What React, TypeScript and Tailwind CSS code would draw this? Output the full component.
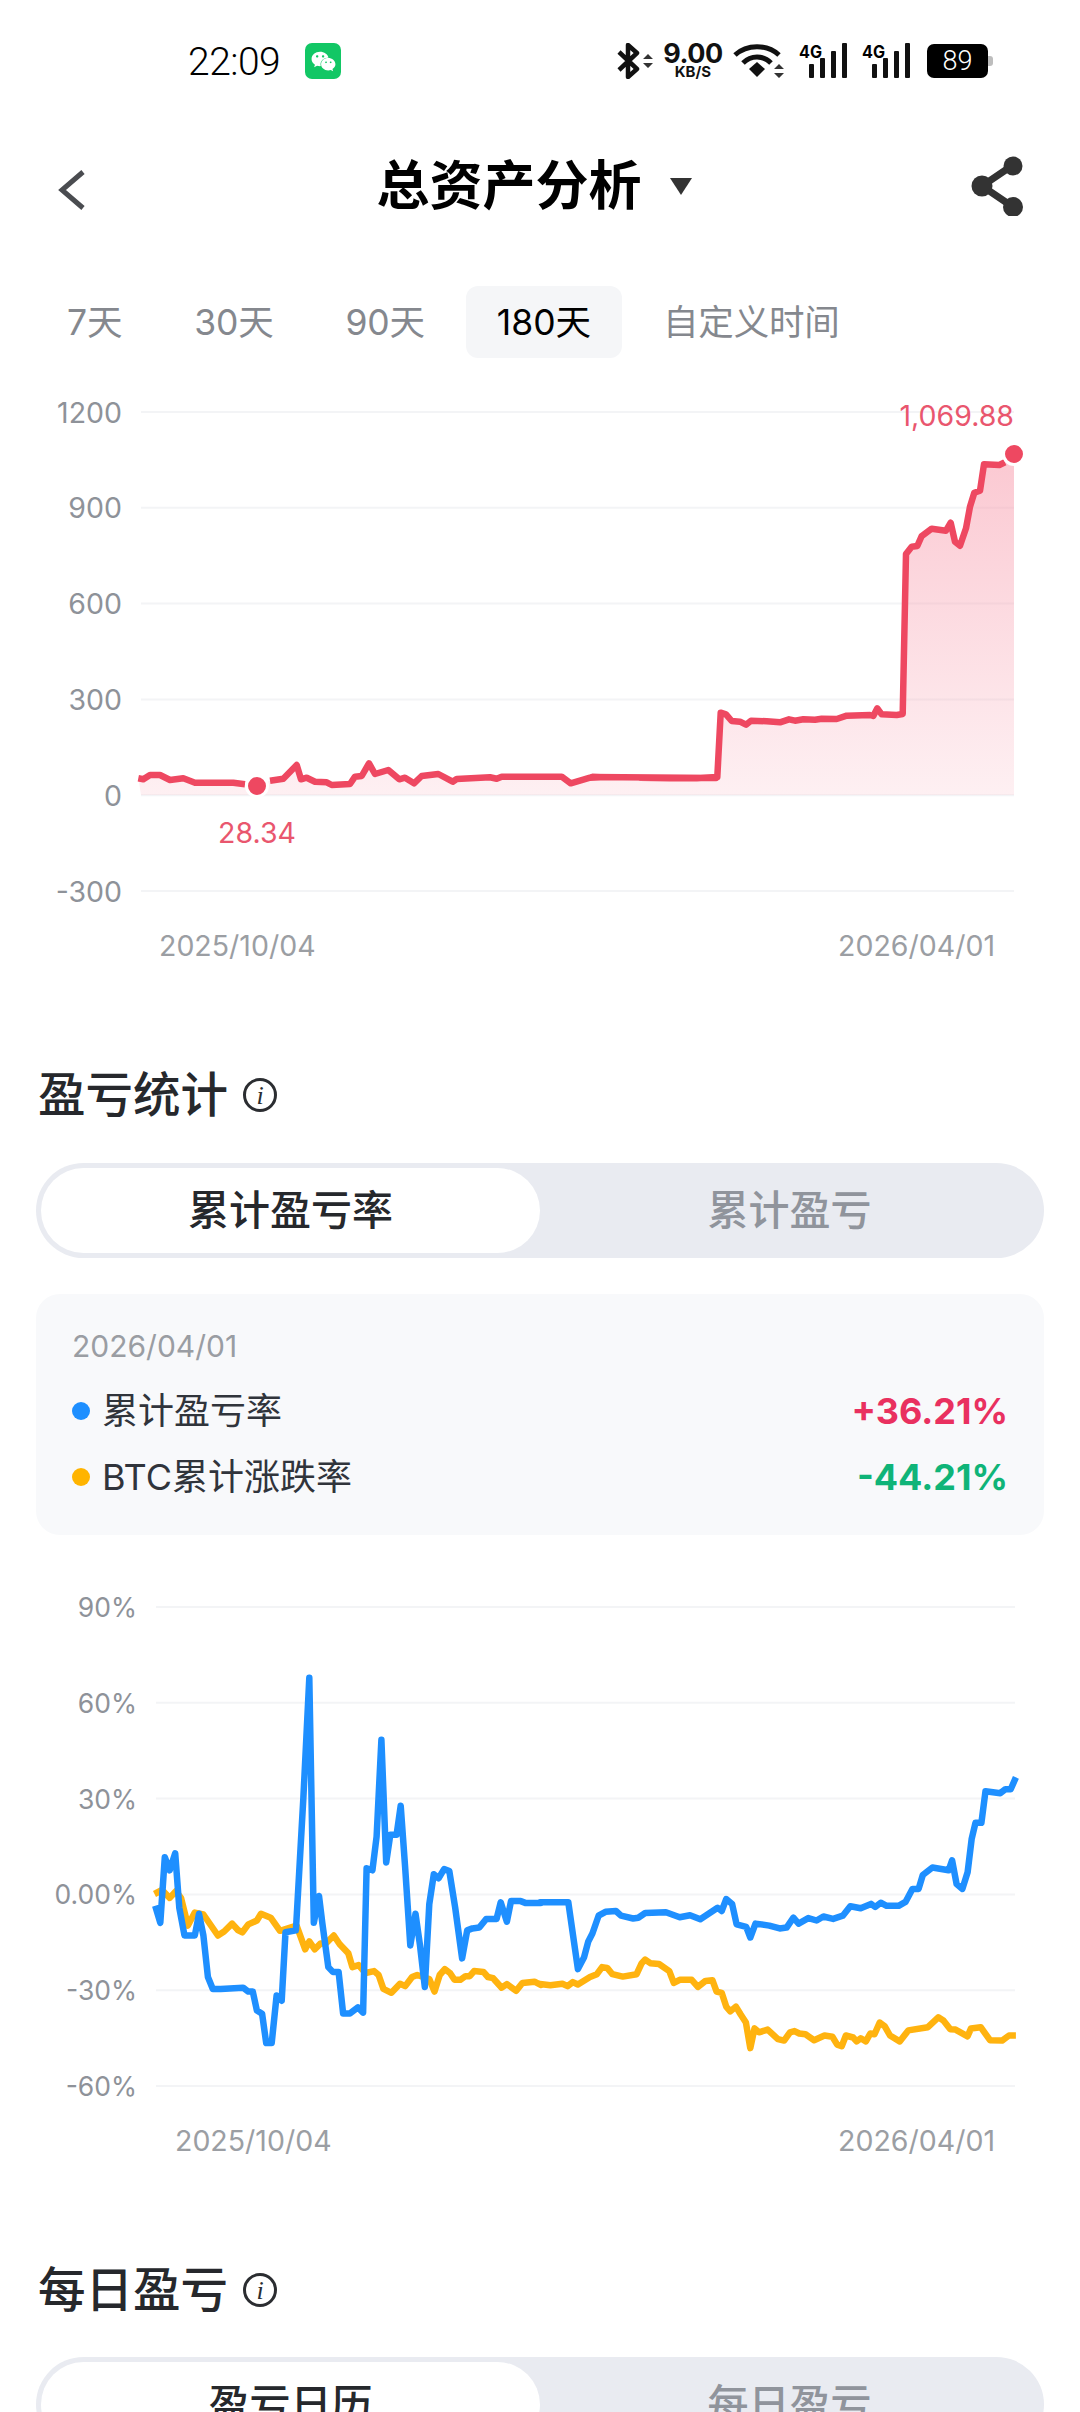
import React from "react";
import { FaWeixin } from "react-icons/fa";

// traced points, "x,y x,y ..." in crop coordinates, mapped to page coordinates by pts()
const pts = (raw: string, ox: number, oy: number, sx: number, sy: number) =>
  raw.trim().split(/\s+/).map((p) => {
    const [x, y] = p.split(",").map(Number);
    return `${(ox + x / sx).toFixed(1)},${(oy + y / sy).toFixed(1)}`;
  });

const assetLeft = pts("55,295 70,298 90,285 120,285 150,300 190,295 225,308 340,308 375,313", 120, 680, 3, 3);
const assetMid = pts("450,302 490,296 530,255 543,298 560,293 585,305 620,307 635,315 690,312 705,290 725,288 747,250 765,282 805,270 838,298 855,293 882,310 905,288 955,282 998,305 1010,297 1110,292 1130,296 1145,290 1325,290 1352,310 1410,293 1440,292", 120, 680, 3, 3);
const assetRight = pts("0,1133 90,1135 170,1135 232,1131 242,938 258,943 275,963 300,965 318,974 333,962 380,964 420,967 447,958 465,962 490,958 525,959 545,956 590,957 620,947 690,945 700,948 712,925 725,943 770,945 788,942 798,462 815,440 832,438 845,408 875,386 918,392 932,368 945,425 960,437 978,385 990,320 1003,278 1020,272 1032,193 1078,195 1095,187", 640, 400, 3, 3);

const blue = [
  ...pts("450,875 465,918 478,752 492,785 508,742 520,880 535,950 565,950 577,895 590,950 603,1055 617,1085 640,1085 705,1082 720,1092 733,1092 745,1140 760,1148 772,1222 788,1222 802,1102 817,1115 828,942 858,937 880,600 897,298 910,918 925,850 935,920 952,1030 965,1042 982,1042 995,1147 1015,1147 1038,1132 1053,1145 1063,780 1080,785 1092,700 1106,455 1120,765 1132,695 1150,695 1162,622 1175,780 1190,975 1205,895 1218,975 1232,1080 1245,870 1258,795 1272,805 1288,782 1303,787 1320,880 1340,1008 1355,937 1370,932 1390,930 1410,908 1440,908 1452,866 1470,915 1482,863 1510,863 1525,868 1568,868", 0, 1560, 2.9, 2.53),
  ...pts("0,866 82,866 110,1035 128,1005 140,965 152,945 170,900 190,890 220,888 235,900 270,907 285,905 305,893 365,891 405,904 435,899 465,909 515,880 527,888 540,858 557,870 570,922 598,928 610,955 625,920 665,925 695,932 715,930 735,905 750,920 778,906 802,912 822,902 850,908 878,900 900,876 930,881 960,870 972,878 988,867 1005,875 1040,875 1060,865 1080,832 1098,832 1110,797 1138,778 1185,785 1195,760 1208,820 1225,832 1240,790 1252,705 1263,665 1280,665 1292,585 1335,590 1350,580 1365,580 1380,550", 540, 1560, 2.9, 2.53),
];

const yellow = [
  ...pts("448,845 470,835 492,855 510,838 525,855 545,925 565,892 590,897 632,950 650,940 673,920 690,936 703,942 720,922 745,912 757,895 785,905 812,938 860,925 885,985 897,965 913,985 930,970 945,970 968,950 985,972 1010,995 1022,1030 1040,1025 1060,1045 1085,1040 1098,1050 1112,1085 1135,1095 1160,1072 1175,1078 1195,1055 1210,1050 1245,1060 1260,1092 1275,1050 1290,1035 1305,1045 1318,1062 1335,1062 1350,1053 1362,1053 1375,1040 1402,1042 1415,1055 1430,1058 1455,1082 1470,1073 1497,1090 1515,1070 1550,1067 1568,1075", 0, 1560, 2.9, 2.53),
  ...pts("0,1073 30,1076 65,1072 80,1078 95,1068 110,1074 145,1055 165,1048 180,1030 195,1032 210,1048 240,1054 280,1048 295,1020 305,1011 320,1020 345,1022 375,1040 388,1070 405,1062 440,1062 458,1080 480,1065 500,1063 512,1092 527,1095 540,1130 552,1142 568,1130 582,1150 597,1170 610,1235 622,1185 635,1195 660,1188 690,1212 708,1216 725,1195 738,1192 752,1198 770,1200 795,1215 825,1203 848,1206 862,1226 875,1230 887,1203 908,1208 918,1218 930,1210 945,1218 958,1198 970,1200 985,1170 1000,1180 1015,1203 1043,1218 1068,1190 1125,1182 1155,1157 1170,1165 1190,1187 1205,1188 1240,1205 1250,1185 1278,1182 1305,1215 1340,1216 1360,1203 1380,1203", 540, 1560, 2.9, 2.53),
];

const assetLine = [...assetLeft, "257,786", ...assetMid, "592,777", "716,778", ...assetRight];

function Bars({ x }: { x: number }) {
  return (
    <svg width="48" height="36" viewBox="0 0 48 36" className="block">
      <text x="0" y="14.5" className="fill-black text-[17px] font-bold" textLength="23" lengthAdjust="spacingAndGlyphs">4G</text>
      <rect x={x} y="21" width="5" height="14" rx="1" fill="#111" />
      <rect x={x + 11} y="15" width="5" height="20" rx="1" fill="#111" />
      <rect x={x + 22} y="8" width="5" height="27" rx="1" fill="#111" />
      <rect x={x + 33} y="0" width="5" height="35" rx="1" fill="#111" />
    </svg>
  );
}

function StatusBar() {
  return (
    <div className="flex h-[122px] shrink-0 items-center pl-[188px] text-black">
      <span className="w-[117px] pt-[2px] text-[39px] leading-none font-light tracking-[-0.5px] font-['Roboto',sans-serif]">22:09</span>
      <div className="flex h-[36px] w-[36px] items-center justify-center rounded-[7px] bg-[#12C765]">
        <FaWeixin className="text-[25px] text-white" />
      </div>
      <div className="ml-[276px] flex items-center">
        <svg width="36" height="36" viewBox="0 0 36 36" className="block">
          <path d="M2 9 L20 26 L11 34 L11 2 L20 10 L2 27" fill="none" stroke="#111" strokeWidth="4.5" strokeLinejoin="round" />
          <path d="M26 16 L31 11 L36 16 Z M26 20 L31 25 L36 20 Z" fill="#333" />
        </svg>
        <div className="ml-[10px] flex w-[60px] flex-col items-center font-['Inter',sans-serif] text-[#111]">
          <span className="h-[22px] text-[27px] leading-[22px] font-bold tracking-[-0.5px]">9.00</span>
          <span className="h-[14px] text-[15px] leading-[14px] font-bold">KB/S</span>
        </div>
        <svg width="52" height="38" viewBox="0 0 52 38" className="ml-[10px] block">
          <path d="M2 13 C14 2 34 2 46 13" fill="none" stroke="#111" strokeWidth="5" />
          <path d="M10 21 C18 13 30 13 38 21" fill="none" stroke="#111" strokeWidth="5" />
          <path d="M16 27 L24 20 L32 27 L24 35 Z" fill="#111" />
          <path d="M41 27 L46 22 L51 27 Z M41 31 L46 36 L51 31 Z" fill="#333" />
        </svg>
        <div className="ml-[14px]">
          <Bars x={10} />
        </div>
        <div className="ml-[15px]">
          <Bars x={10} />
        </div>
        <div className="ml-[17px] flex items-center">
          <div className="flex h-[34px] w-[61px] items-center justify-center rounded-[7px] bg-black text-[27px] leading-none font-light text-white font-['Roboto',sans-serif]">89</div>
          <div className="h-[10px] w-[5px] rounded-r-[3px] bg-[#bdbdbd]" />
        </div>
      </div>
    </div>
  );
}

function Header() {
  return (
    <div className="relative flex h-[128px] shrink-0 items-center justify-between pl-[58px] pr-[56px]">
      <svg width="28" height="40" viewBox="0 0 28 40" className="mt-[7px] block">
        <polyline points="25,2 4,20 25,38" fill="none" stroke="#4a4c50" strokeWidth="5" />
      </svg>
      <div className="ml-[14px] flex items-center">
        <span className="text-[53px] leading-none font-bold text-black">总资产分析</span>
        <svg width="22" height="17" viewBox="0 0 22 17" className="ml-[28px] block">
          <path d="M0 0 H22 L11 17 Z" fill="#333" />
        </svg>
      </div>
      <svg width="56" height="60" viewBox="0 0 56 60" className="block">
        <path d="M45 9 L14 30 L45 51" fill="none" stroke="#333" strokeWidth="7" />
        <circle cx="45" cy="10" r="9.5" fill="#333" />
        <circle cx="14" cy="30" r="10.5" fill="#333" />
        <circle cx="45" cy="51" r="10" fill="#333" />
      </svg>
    </div>
  );
}

const ranges = ["7天", "30天", "90天", "180天", "自定义时间"];

function RangeTabs() {
  return (
    <div className="mt-[36px] flex h-[72px] shrink-0 gap-[10px] pl-[36px]">
      {ranges.map((r) => (
        <div
          key={r}
          className={
            r === "180天"
              ? "flex items-center rounded-[12px] bg-[#F5F6F8] px-[31px] pt-[2px] text-[35.5px] leading-none text-black"
              : "flex items-center px-[31px] pt-[2px] text-[35.5px] leading-none tracking-[-0.2px] text-[#85888e]"
          }
        >
          {r}
        </div>
      ))}
    </div>
  );
}

const axisText = "fill-[#8e9299] text-[28.5px]";
const rateAxisText = "fill-[#8e9299] text-[26.5px]";
const dateText = "fill-[#9b9ea3] text-[28.5px]";

function AssetChart() {
  const labels = ["1200", "900", "600", "300", "0", "-300"];
  const linePath = assetLine.join(" ");
  return (
    <svg width="1080" height="595" viewBox="0 390 1080 595" className="mt-[32px] block shrink-0">
      <defs>
        <linearGradient id="assetFill" gradientUnits="userSpaceOnUse" x1="0" y1="450" x2="0" y2="795">
          <stop offset="0" stopColor="#F8A0B0" stopOpacity="0.58" />
          <stop offset="1" stopColor="#F8A0B0" stopOpacity="0.16" />
        </linearGradient>
      </defs>
      {labels.map((l, i) => {
        const y = 412 + i * 95.8;
        return (
          <g key={l}>
            <line x1="141" x2="1014" y1={y} y2={y} stroke="#F3F4F6" strokeWidth="2" />
            <text x="122" y={y} textAnchor="end" dominantBaseline="central" className={axisText}>{l}</text>
          </g>
        );
      })}
      <polygon points={`141,795 ${linePath} 1014,454 1014,795`} fill="url(#assetFill)" />
      <polyline points={assetLine.slice(0, 9).join(" ")} fill="none" stroke="#EE4861" strokeWidth="6.5" strokeLinejoin="round" />
      <polyline points={assetLine.slice(10).join(" ")} fill="none" stroke="#EE4861" strokeWidth="6.5" strokeLinejoin="round" />
      <circle cx="257" cy="786" r="10.5" fill="#EE4861" stroke="#fff" strokeWidth="3" />
      <circle cx="1014" cy="454" r="10.5" fill="#EE4861" stroke="#fff" strokeWidth="3" />
      <text x="1014" y="415" textAnchor="end" dominantBaseline="central" className="fill-[#E9566E] text-[28.5px]">1,069.88</text>
      <text x="257" y="832" textAnchor="middle" dominantBaseline="central" className="fill-[#E9566E] text-[28.5px]">28.34</text>
      <text x="159" y="945" dominantBaseline="central" className={dateText}>2025/10/04</text>
      <text x="995" y="945" textAnchor="end" dominantBaseline="central" className={dateText}>2026/04/01</text>
    </svg>
  );
}

function RateChart() {
  const labels = ["90%", "60%", "30%", "0.00%", "-30%", "-60%"];
  return (
    <svg width="1080" height="590" viewBox="0 1580 1080 590" className="mt-[45px] block shrink-0">
      {labels.map((l, i) => {
        const y = 1607 + i * 95.8;
        return (
          <g key={l}>
            <line x1="156" x2="1015" y1={y} y2={y} stroke="#F3F4F6" strokeWidth="2" />
            <text x="137" y={y} textAnchor="end" dominantBaseline="central" className={rateAxisText}>{l}</text>
          </g>
        );
      })}
      <polyline points={yellow.join(" ")} fill="none" stroke="#FFB30F" strokeWidth="6.5" strokeLinejoin="round" />
      <polyline points={blue.join(" ")} fill="none" stroke="#1E8FFF" strokeWidth="6.5" strokeLinejoin="round" />
      <text x="175" y="2140" dominantBaseline="central" className={dateText}>2025/10/04</text>
      <text x="995" y="2140" textAnchor="end" dominantBaseline="central" className={dateText}>2026/04/01</text>
    </svg>
  );
}

function SectionTitle({ text }: { text: string }) {
  return (
    <div className="flex h-[60px] items-center pl-[38px]">
      <span className="text-[47.5px] leading-none font-medium text-[#26282c]">{text}</span>
      <svg width="36" height="36" viewBox="0 0 36 36" className="ml-[14px] block">
        <circle cx="18" cy="18" r="15.5" fill="none" stroke="#2b2d31" strokeWidth="3" />
        <text x="18" y="27" textAnchor="middle" className="fill-[#2b2d31] text-[26px] italic font-['Liberation_Serif',serif]">i</text>
      </svg>
    </div>
  );
}

function Segment({ left, right }: { left: string; right: string }) {
  return (
    <div className="mx-[36px] flex h-[95px] rounded-full bg-[#E9EBF1] p-[5px]">
      <div className="flex w-[499px] items-center justify-center rounded-full bg-white text-[41px] leading-none font-medium text-[#26282c]">{left}</div>
      <div className="flex flex-1 items-center justify-center text-[41px] leading-none font-medium text-[#90949c]">{right}</div>
    </div>
  );
}

function LegendRow({ color, label, value, valueColor }: { color: string; label: string; value: string; valueColor: string }) {
  return (
    <div className="flex h-[66px] items-center justify-between">
      <div className="flex items-center">
        <span className={`h-[18px] w-[18px] rounded-full ${color}`} />
        <span className="ml-[12px] text-[36px] leading-none text-[#30343b]">{label}</span>
      </div>
      <span className={`text-[36px] leading-none font-bold ${valueColor}`}>{value}</span>
    </div>
  );
}

export default function App() {
  return (
    <div className="flex h-[2412px] w-[1080px] flex-col overflow-hidden bg-white font-['Inter','Noto_Sans_CJK_SC',sans-serif]">
      <StatusBar />
      <Header />
      <RangeTabs />
      <AssetChart />
      <div className="mt-[80px] shrink-0">
        <SectionTitle text="盈亏统计" />
      </div>
      <div className="mt-[38px] shrink-0">
        <Segment left="累计盈亏率" right="累计盈亏" />
      </div>
      <div className="mx-[36px] mt-[36px] h-[241px] shrink-0 rounded-[24px] bg-[#F8F9FB] pt-[32px] pl-[36px] pr-[36px]">
        <div className="flex h-[40px] items-center text-[30px] leading-none text-[#9a9da3]">2026/04/01</div>
        <div className="mt-[12px]">
          <LegendRow color="bg-[#1E8FFF]" label="累计盈亏率" value="+36.21%" valueColor="text-[#E9305F]" />
          <LegendRow color="bg-[#FFB400]" label="BTC累计涨跌率" value="-44.21%" valueColor="text-[#0FB478]" />
        </div>
      </div>
      <RateChart />
      <div className="mt-[90px] shrink-0">
        <SectionTitle text="每日盈亏" />
      </div>
      <div className="mt-[37px] shrink-0">
        <Segment left="盈亏日历" right="每日盈亏" />
      </div>
    </div>
  );
}
